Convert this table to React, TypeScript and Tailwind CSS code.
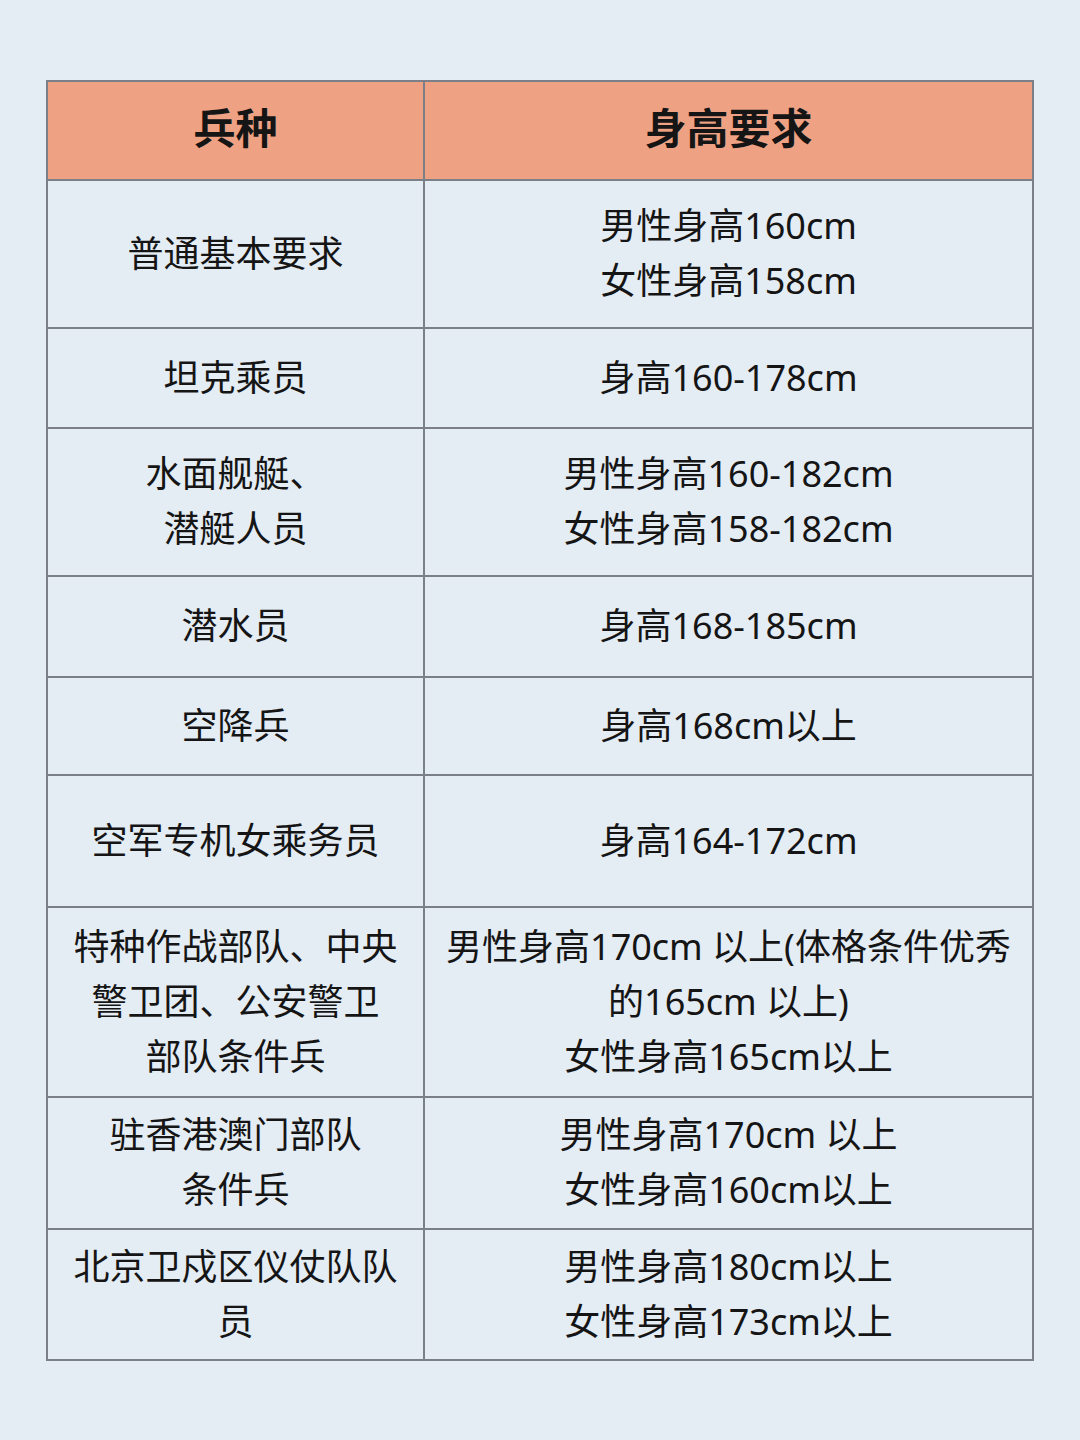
import React from "react";

const rows: { h: number; left: string[]; right: string[] }[] = [
  { h: 146, left: ["普通基本要求"], right: ["男性身高160cm", "女性身高158cm"] },
  { h: 98, left: ["坦克乘员"], right: ["身高160-178cm"] },
  { h: 146, left: ["水面舰艇、", "潜艇人员"], right: ["男性身高160-182cm", "女性身高158-182cm"] },
  { h: 99, left: ["潜水员"], right: ["身高168-185cm"] },
  { h: 96, left: ["空降兵"], right: ["身高168cm以上"] },
  { h: 130, left: ["空军专机女乘务员"], right: ["身高164-172cm"] },
  {
    h: 188,
    left: ["特种作战部队、中央", "警卫团、公安警卫", "部队条件兵"],
    right: ["男性身高170cm 以上(体格条件优秀", "的165cm 以上)", "女性身高165cm以上"],
  },
  { h: 130, left: ["驻香港澳门部队", "条件兵"], right: ["男性身高170cm 以上", "女性身高160cm以上"] },
  { h: 129, left: ["北京卫戍区仪仗队队", "员"], right: ["男性身高180cm以上", "女性身高173cm以上"] },
];

export default function App() {
  return (
    <div
      className="w-[1080px] h-[1440px] bg-[#e4ecf4] pt-[80px] pl-[46px]"
      style={{ fontFamily: '"Noto Sans", "Noto Sans CJK SC", sans-serif' }}
    >
      <div className="w-[988px] border-2 border-[#7a7f88] text-[#151515]">
        <div className="flex h-[97px] bg-[#efa283]">
          <div className="w-[377px] shrink-0 border-r-2 border-[#7a7f88] flex items-center justify-center pb-[6px] text-[42px] font-bold">
            兵种
          </div>
          <div className="flex-1 flex items-center justify-center pb-[6px] text-[42px] font-bold">身高要求</div>
        </div>
        {rows.map((r, i) => (
          <div key={i} className="flex border-t-2 border-[#7a7f88]" style={{ height: r.h + 2 }}>
            <div className="w-[377px] shrink-0 border-r-2 border-[#7a7f88] flex flex-col items-center justify-center pb-[2px] text-[36px] leading-[55px] text-center whitespace-nowrap">
              {r.left.map((t, j) => (
                <div key={j}>{t}</div>
              ))}
            </div>
            <div className="flex-1 flex flex-col items-center justify-center pb-[2px] text-[36px] leading-[55px] text-center whitespace-nowrap">
              {r.right.map((t, j) => (
                <div key={j}>{t}</div>
              ))}
            </div>
          </div>
        ))}
      </div>
    </div>
  );
}
